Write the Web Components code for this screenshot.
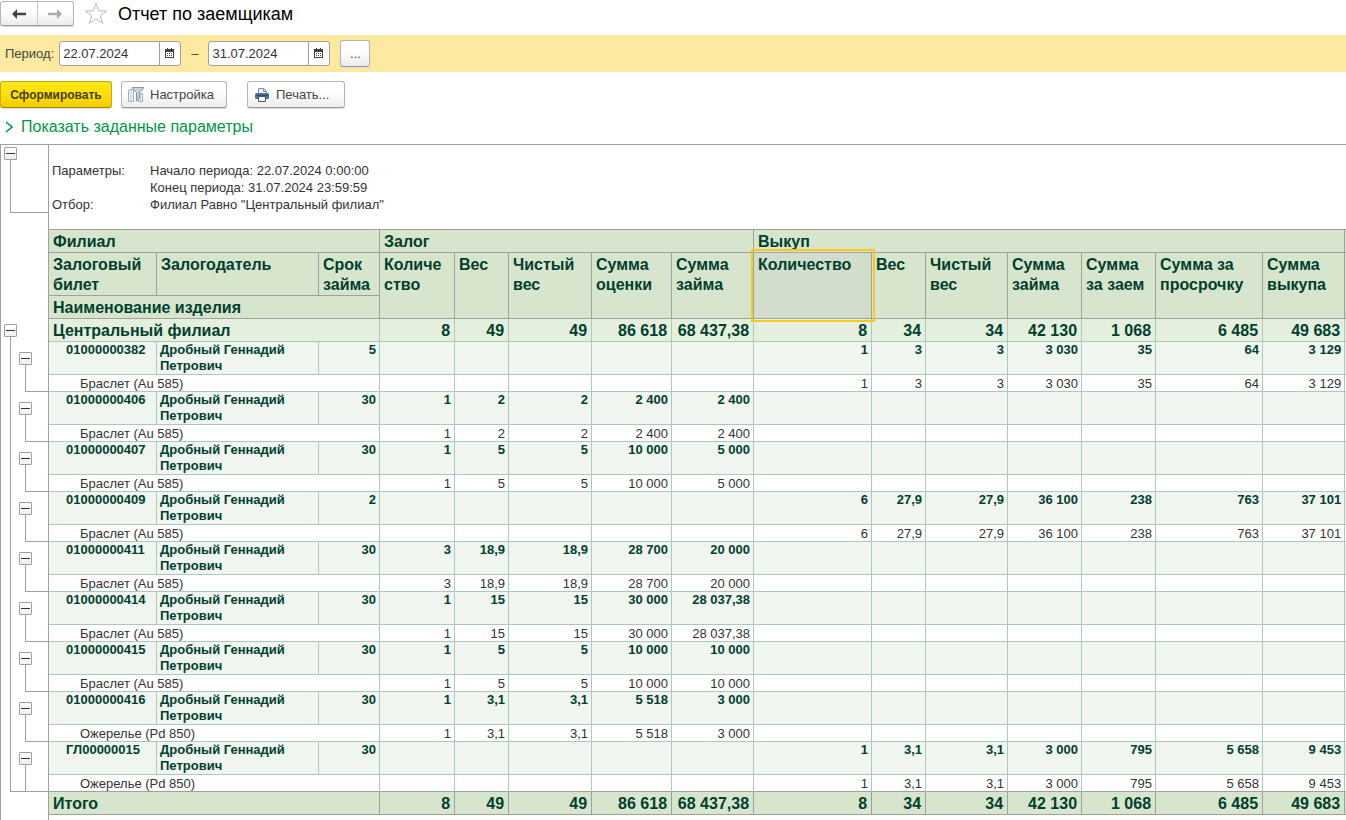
<!DOCTYPE html>
<html lang="ru">
<head>
<meta charset="utf-8">
<title>Отчет по заемщикам</title>
<style>
html, body { margin: 0; height: 100%; background: #fff; }
body { font: 13px/16px "Liberation Sans", Arial, sans-serif; color: #444; overflow: hidden; }
</style>
</head>
<body>
<report-page></report-page>
<script>
const define = (name, html, setup) => customElements.define(name, class extends HTMLElement {
  constructor() {
    super();
    const template = document.createElement('template');
    template.innerHTML = html;
    this.attachShadow({ mode: 'open' }).append(template.content.cloneNode(true));
  }
  connectedCallback() { if (setup) setup(this, this.shadowRoot); }
});

define('tool-button', `
<style>
:host { display: inline-flex; }
button { display: flex; align-items: center; justify-content: center; gap: 6px; flex: 1; height: 27px; box-sizing: border-box;
  border: 1px solid #b4b4b4; border-bottom-color: #999; border-radius: 3px; padding: 0 6px; color: #444; font: inherit;
  background: linear-gradient(#fff 40%, #ececec); box-shadow: 0 1px 0 #ddd; white-space: nowrap; }
:host([with-icon]) button { justify-content: flex-start; }
:host([primary]) button { background: linear-gradient(#ffe81a, #ffdc00 60%, #f0cd00); border-color: #c9ab00; border-bottom-color: #a48c00; font-weight: bold; font-size: 12px; color: #443e2a; }
</style>
<button type="button"><slot name="icon"></slot><slot></slot></button>`);

define('history-buttons', `
<style>
:host { display: flex; width: 74px; height: 25px; box-sizing: border-box; border: 1px solid #b4b4b4; border-bottom-color: #999; border-radius: 3px;
  background: linear-gradient(#fff 40%, #ececec); box-shadow: 0 1px 0 #ddd; }
button { flex: 1; display: grid; place-items: center; border: 0; padding: 0; background: none; color: #444; }
button + button { border-left: 1px solid #ccc; color: #aaa; }
</style>
<button type="button" aria-label="Назад"><svg width="14" height="10"><path d="M0 5l5-5v3.7h9v2.6H5V10z" fill="currentColor"/></svg></button>
<button type="button" aria-label="Вперед"><svg width="14" height="10"><path d="M14 5L9 0v3.7H0v2.6h9V10z" fill="currentColor"/></svg></button>`);

define('date-field', `
<style>
:host { display: flex; width: 122px; height: 25px; box-sizing: border-box; border: 1px solid #a0a0a0; border-radius: 3px; background: #fff; overflow: hidden; }
input { flex: 1; min-width: 0; border: 0; padding: 0 3px; font: inherit; color: #333; background: none; outline: 0; }
button { width: 21px; border: 0; border-left: 1px solid #a0a0a0; padding: 0 1px 2px 0; background: none; display: grid; place-items: center; }
</style>
<input type="text"><button type="button" aria-label="Выбрать дату"><svg width="9" height="10" shape-rendering="crispEdges"><path d="M0 1h9v9H0zM1 4v5h7V4z" fill="#444" fill-rule="evenodd"/><path d="M2 0h1v1H2zM6 0h1v1H6z" fill="#444"/><path d="M2 5h1v1H2zM4 5h1v1H4zM6 5h1v1H6zM2 7h1v1H2zM4 7h1v1H4zM6 7h1v1H6z" fill="#444"/></svg></button>`,
(host, root) => {
  const input = root.querySelector('input');
  input.value = host.getAttribute('value');
  input.setAttribute('aria-label', host.getAttribute('label'));
});

define('outline-toggle', `
<style>
:host { display: block; width: 13px; height: 13px; }
button { display: grid; place-items: center; width: 13px; height: 13px; box-sizing: border-box; border: 1px solid #a0a0a0; border-radius: 1px; padding: 0; background: linear-gradient(#fff, #f0f0f0); }
i { width: 9px; height: 1px; background: #333; }
</style>
<button type="button" aria-label="Свернуть"><i></i></button>`);

define('outline-gutter', `
<style>
:host { display: flex; flex-direction: column; border-right: 1px solid #a0a0a0; box-sizing: border-box; }
.group { display: grid; grid-template-columns: 15px 1fr; padding-left: 3px; box-sizing: border-box; }
.rail { display: flex; flex-direction: column; width: 13px; }
.rail::after { content: ""; flex: 1; margin-left: 6px; border-left: 1px solid #a0a0a0; border-bottom: 1px solid #a0a0a0; }
.first { height: 68px; padding-top: 2px; margin-bottom: 111px; }
.first .rail, .leaf .rail { width: auto; }
.first .rail { grid-column: 1 / -1; }
.branch { height: 468px; }
.leaf { height: 50px; padding-top: 10px; box-sizing: border-box; display: flex; flex-direction: column; }
.leaf .rail { flex: 1; }
.leaves { height: 468px; padding-top: 18px; box-sizing: border-box; }
.branch .rail.main::after { width: 15px; }
</style>
<div class="group first"><div class="rail"><outline-toggle></outline-toggle></div></div>
<div class="group branch"><div class="rail main"><outline-toggle></outline-toggle></div><div class="leaves"></div></div>`,
(host, root) => {
  root.querySelector('.leaves').innerHTML = '<div class="leaf"><div class="rail"><outline-toggle></outline-toggle></div></div>'.repeat(9);
});

define('report-parameters', `
<style>
:host { display: block; height: 84px; box-sizing: border-box; padding: 17px 3px 0; color: #333; }
dl { display: grid; grid-template-columns: 98px 1fr; grid-auto-rows: 17px; line-height: 17px; margin: 0; }
dd { margin: 0; grid-column: 2; }
</style>
<dl><dt>Параметры:</dt><dd>Начало периода: 22.07.2024 0:00:00</dd><dd>Конец периода: 31.07.2024 23:59:59</dd><dt>Отбор:</dt><dd>Филиал Равно "Центральный филиал"</dd></dl>`);

const columnWidths = [108, 162, 61, 75, 54, 83, 80, 82, 118, 54, 82, 74, 74, 107, 82];
const none5 = ['', '', '', '', ''];
const none7 = ['', '', '', '', '', '', ''];
const loans = [
  ['01000000382', '5', 'Браслет (Au 585)', [...none5, '1', '3', '3', '3 030', '35', '64', '3 129']],
  ['01000000406', '30', 'Браслет (Au 585)', ['1', '2', '2', '2 400', '2 400', ...none7]],
  ['01000000407', '30', 'Браслет (Au 585)', ['1', '5', '5', '10 000', '5 000', ...none7]],
  ['01000000409', '2', 'Браслет (Au 585)', [...none5, '6', '27,9', '27,9', '36 100', '238', '763', '37 101']],
  ['01000000411', '30', 'Браслет (Au 585)', ['3', '18,9', '18,9', '28 700', '20 000', ...none7]],
  ['01000000414', '30', 'Браслет (Au 585)', ['1', '15', '15', '30 000', '28 037,38', ...none7]],
  ['01000000415', '30', 'Браслет (Au 585)', ['1', '5', '5', '10 000', '10 000', ...none7]],
  ['01000000416', '30', 'Ожерелье (Pd 850)', ['1', '3,1', '3,1', '5 518', '3 000', ...none7]],
  ['ГЛ00000015', '30', 'Ожерелье (Pd 850)', [...none5, '1', '3,1', '3,1', '3 000', '795', '5 658', '9 453']],
];
const totals = ['8', '49', '49', '86 618', '68 437,38', '8', '34', '34', '42 130', '1 068', '6 485', '49 683'];

define('report-table', `
<style>
:host { display: block; border-top: 1px solid #a0a0a0; }
table { width: 100%; table-layout: fixed; border-collapse: separate; border-spacing: 0; }
th, td { box-sizing: border-box; padding: 0 3px; border: 0 solid #adc8bd; border-width: 0 1px 1px 0; vertical-align: top; text-align: left; font-weight: inherit; white-space: nowrap; }
.edge { border-right: 0; padding: 0; }
thead th, tfoot th, tfoot td { background: #d7e5cd; border-color: #a0a0a0; }
thead th, .branch > *, tfoot th, tfoot td { font-size: 16px; line-height: 20px; font-weight: bold; color: #003f2f; padding: 2px 4px 0; }
thead th { white-space: normal; }
.branch > * { background: #e4f0dd; }
.loan > * { background: #f0f5ef; color: #003f2f; font-weight: bold; }
.loan > .person { white-space: normal; }
.loan { height: 33px; }
.item { height: 17px; color: #333; }
.item > * { line-height: 14px; padding-top: 2px; }
.item > th { padding-left: 31px; }
.loan > .ticket { padding-left: 17px; }
.num { text-align: right; }
tbody tr:last-child > * { border-bottom-color: #a0a0a0; }
.branch, tfoot tr, .h1, .h3 { height: 23px; }
.h2 { height: 43px; }
thead th.current { position: relative; background: #d2decb; }
.current::after { content: ""; position: absolute; inset: -4px -4px -4px -3px; border: 2px solid #fbc81f; pointer-events: none; }
</style>
<table><colgroup></colgroup>
<thead>
<tr class="h1"><th colspan="3">Филиал</th><th colspan="5">Залог</th><th colspan="7">Выкуп</th><th class="edge"></th></tr>
<tr class="h2"><th>Залоговый билет</th><th>Залогодатель</th><th>Срок займа</th><th rowspan="2">Количе<wbr>ство</th><th rowspan="2">Вес</th><th rowspan="2">Чистый вес</th><th rowspan="2">Сумма оценки</th><th rowspan="2">Сумма займа</th><th rowspan="2" class="current">Количество</th><th rowspan="2">Вес</th><th rowspan="2">Чистый вес</th><th rowspan="2">Сумма займа</th><th rowspan="2">Сумма за&nbsp;заем</th><th rowspan="2">Сумма за просрочку</th><th rowspan="2">Сумма выкупа</th><th rowspan="2" class="edge"></th></tr>
<tr class="h3"><th colspan="3">Наименование изделия</th></tr>
</thead><tbody></tbody><tfoot></tfoot></table>`,
(host, root) => {
  const cells = values => values.map(v => `<td class="num">${v}</td>`).join('') + '<td class="edge"></td>';
  root.querySelector('colgroup').innerHTML = columnWidths.map(w => `<col style="width:${w}px">`).join('') + '<col>';
  root.querySelector('tbody').innerHTML = `<tr class="branch"><th colspan="3">Центральный филиал</th>${cells(totals)}</tr>` +
    loans.map(([ticket, term, item, values]) =>
      `<tr class="loan"><th class="ticket">${ticket}</th><td class="person">Дробный Геннадий Петрович</td><td class="num">${term}</td>${cells(values)}</tr>
       <tr class="item"><th colspan="3">${item}</th>${cells(values)}</tr>`).join('');
  root.querySelector('tfoot').innerHTML = `<tr><th colspan="3">Итого</th>${cells(totals)}</tr>`;
});

define('report-page', `
<style>
:host { display: flex; flex-direction: column; min-height: 100vh; }
header { display: flex; align-items: center; height: 35px; padding-bottom: 8px; box-sizing: border-box; }
.star { margin: 0 10px; }
h1 { margin: 0; font-size: 18px; line-height: 24px; font-weight: normal; color: #000; }
.period { display: flex; align-items: center; height: 37px; padding-left: 5px; background: #fde99f; }
.period date-field { margin-left: 5px; }
.dash { margin-left: 10px; }
.dash + date-field { margin-left: 10px; }
.period tool-button { margin-left: 10px; width: 30px; }
.commands { display: flex; padding-top: 9px; height: 36px; }
.primary { width: 112px; }
.settings { width: 106px; margin-left: 9px; }
.print { width: 98px; margin-left: 20px; }
.more { display: flex; align-items: center; gap: 8px; height: 20px; padding-left: 5px; margin-bottom: 7px; font-size: 16px; color: #009646; text-decoration: none; }
.sheet { flex: 1; display: grid; grid-template-columns: 48px 1fr; border: 1px solid #a0a0a0; border-width: 1px 0 0 1px; }
.content { min-width: 0; overflow-x: auto; }
</style>
<header><history-buttons></history-buttons>
<svg class="star" width="24" height="23" viewBox="0 0 24 23"><path d="M12 1.500l2.700 7.300 7.800.2-6.200 4.800 2.200 7.500L12 17l-6.500 4.300 2.200-7.500L1.500 9l7.800-.2z" fill="#fff" stroke="#b4bcc6"/></svg>
<h1>Отчет по заемщикам</h1></header>
<div class="period"><span>Период:</span><date-field value="22.07.2024" label="Начало периода"></date-field><span class="dash">–</span><date-field value="31.07.2024" label="Конец периода"></date-field><tool-button>...</tool-button></div>
<div class="commands"><tool-button primary class="primary">Сформировать</tool-button>
<tool-button with-icon class="settings"><svg slot="icon" width="16" height="17"><path d="M.5 4.500l1-1h4v12h-5zM10.500 7.500h4v8h-4z" fill="#f1f4f7" stroke="#a3aeb9"/><path d="M3 4v11M12.500 8v7" stroke="#c3ccd4"/><path d="M4 1h12v1.500l-4.500 4.500v6L8 16V7L4 2.500z" fill="#fff"/><path d="M4.500 1.500h11v1L11.500 6.500v6l-3 2.500V6.500l-4-4z" fill="#c6d3dd" stroke="#8796a4"/></svg>Настройка</tool-button>
<tool-button with-icon class="print"><svg slot="icon" width="16" height="16"><path d="M4.500 7V1.500h5l3 3V7M9.500 1.500v3h3" fill="#fff" stroke="#7e8e9c"/><rect x="1" y="6" width="14" height="6" rx="1.500" fill="#4e7196"/><path d="M2 8.500h12" stroke="#2d4d70"/><path d="M4.500 9.500h7v5h-7z" fill="#fff" stroke="#3b5c80"/></svg>Печать...</tool-button></div>
<a class="more" href="#"><svg width="8" height="12"><path d="M1 1l6 5-6 5" fill="none" stroke="#009646" stroke-width="1.500"/></svg>Показать заданные параметры</a>
<div class="sheet"><outline-gutter></outline-gutter><div class="content"><report-parameters></report-parameters><report-table></report-table></div></div>`);
</script>
</body>
</html>
